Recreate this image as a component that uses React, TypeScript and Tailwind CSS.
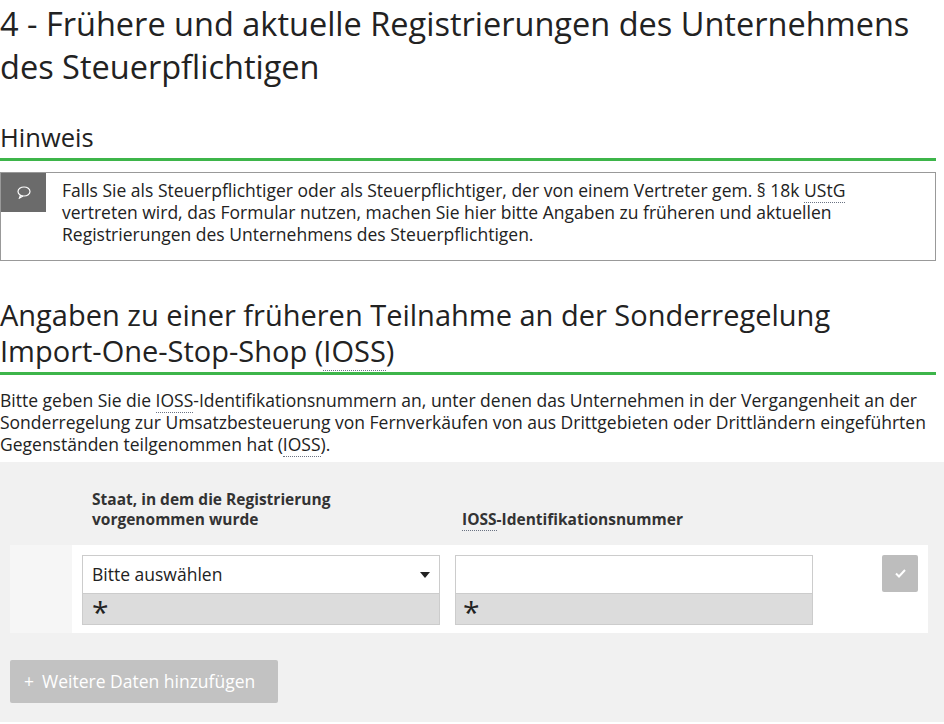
export default function App() {
  const abbr = "border-b border-dotted border-gray-500";
  return (
    <div className="w-[944px] bg-white text-[#333] pr-[8px]" style={{ fontFamily: '"Open Sans", sans-serif' }}>
      <h1 className="text-[32.5px] leading-[43px] pt-[2px] text-[#222]">4 - Frühere und aktuelle Registrierungen des Unternehmens des Steuerpflichtigen</h1>
      <h2 className="mt-[34px] text-[25.5px] leading-[30px] pb-[6px] border-b-[3px] border-[#3db54a] text-[#222]">Hinweis</h2>
      <div className="mt-[11px] flex border border-[#999] h-[89px]">
        <div className="w-[45px] h-[39px] bg-[#6b6b6b] flex items-center justify-center shrink-0">
          <svg width="14" height="13" viewBox="0 0 14 13" fill="none" stroke="white" strokeWidth="1.2">
            <ellipse cx="7" cy="5.5" rx="6" ry="4.5" />
            <path d="M3.5 9.2 L2.5 12 L6 9.9" />
          </svg>
        </div>
        <p className="pl-[16px] pr-[60px] pt-[6px] text-[17.5px] leading-[22px] text-[#222]">
          Falls Sie als Steuerpflichtiger oder als Steuerpflichtiger, der von einem Vertreter gem. § 18k <span className={abbr}>UStG</span> vertreten wird, das Formular nutzen, machen Sie hier bitte Angaben zu früheren und aktuellen Registrierungen des Unternehmens des Steuerpflichtigen.
        </p>
      </div>
      <h2 className="mt-[36px] text-[29px] leading-[36px] pb-[3px] border-b-[3px] border-[#3db54a] text-[#222]">Angaben zu einer früheren Teilnahme an der Sonderregelung Import-One-Stop-Shop (<span className={abbr}>IOSS</span>)</h2>
      <p className="mt-[14px] text-[17.5px] leading-[22px] text-[#222]">
        Bitte geben Sie die <span className={abbr}>IOSS</span>-Identifikationsnummern an, unter denen das Unternehmen in der Vergangenheit an der Sonderregelung zur Umsatzbesteuerung von Fernverkäufen von aus Drittgebieten oder Drittländern eingeführten Gegenständen teilgenommen hat (<span className={abbr}>IOSS</span>).
      </p>
      <div className="mt-[7px] bg-[#f1f1f1] px-[10px] pt-[27px] -mr-[8px] h-[260px]">
        <div className="flex items-end text-[15.5px] font-bold leading-[20px] text-[#333] pb-[16px]">
          <div className="w-[82px]" />
          <div className="w-[370px]">Staat, in dem die Registrierung<br />vorgenommen wurde</div>
          <div><span className={abbr}>IOSS</span>-Identifikationsnummer</div>
        </div>
        <div className="flex bg-white h-[88px] w-[918px]">
          <div className="w-[62px] bg-[#f6f6f6]" />
          <div className="flex gap-[15px] pt-[10px] pl-[10px]">
            <div className="w-[358px] h-[70px] border border-[#ccc] overflow-hidden">
              <div className="h-[37px] bg-white flex items-center justify-between px-[9px] text-[17.5px] text-[#222]">
                <span>Bitte auswählen</span>
                <svg width="10" height="6" viewBox="0 0 10 6"><path d="M0 0h10L5 6z" fill="#222" /></svg>
              </div>
              <div className="h-[31px] bg-[#dcdcdc] border-t border-[#ccc] px-[9px] text-[30px] leading-[36px] text-[#222]">*</div>
            </div>
            <div className="w-[358px] h-[70px] border border-[#ccc] overflow-hidden">
              <div className="h-[37px] bg-white" />
              <div className="h-[31px] bg-[#dcdcdc] border-t border-[#ccc] px-[7px] text-[30px] leading-[36px] text-[#222]">*</div>
            </div>
          </div>
          <div className="ml-[69px] mt-[10px] w-[36px] h-[37px] bg-[#bdbdbd] rounded-[2px] flex items-center justify-center">
            <svg width="11" height="9" viewBox="0 0 11 9"><path d="M1 4.5l3 3L10 1" stroke="white" strokeWidth="2" fill="none" /></svg>
          </div>
        </div>
        <button className="mt-[27px] h-[43px] w-[268px] bg-[#c2c2c2] rounded-[2px] text-white text-[17.5px] flex items-center pl-[14px] gap-[8px]">
          <span>+</span><span>Weitere Daten hinzufügen</span>
        </button>
      </div>
    </div>
  );
}
